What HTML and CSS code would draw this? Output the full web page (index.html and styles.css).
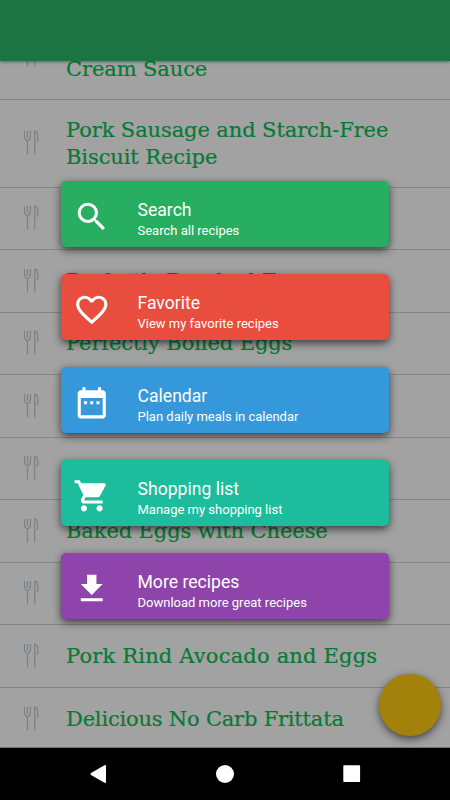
FILE: index.html
```html
<!DOCTYPE html>
<html lang="en">
<head>
<meta charset="utf-8">
<title>Recipes</title>
<link rel="stylesheet" href="styles.css">
</head>
<body>
<svg class="defs" width="0" height="0">
  <symbol id="cutlery" viewBox="0 0 16 26">
    <path d="M1.500 1v5.500Q1.500 9.500 4.500 11Q7.500 9.500 7.500 6.500V1M4.500 1v7M4.500 11v13.500M11.700 24.500V1.200C14 1.200 14.800 4 14.800 7.500V10.500L13.400 11.500" fill="none" stroke="currentColor" stroke-width="1.200"/>
  </symbol>
</svg>
<div class="screen">
  <header class="bar"></header>
  <main class="list">
    <div class="row tall first"><svg class="cutlery"><use href="#cutlery"/></svg><span class="title"><br>Cream Sauce</span></div>
    <div class="row tall"><svg class="cutlery"><use href="#cutlery"/></svg><span class="title">Pork Sausage and Starch-Free<br>Biscuit Recipe</span></div>
    <div class="row"><svg class="cutlery"><use href="#cutlery"/></svg></div>
    <div class="row"><svg class="cutlery"><use href="#cutlery"/></svg><span class="title">Perfectly Poached Eggs</span></div>
    <div class="row"><svg class="cutlery"><use href="#cutlery"/></svg><span class="title">Perfectly Boiled Eggs</span></div>
    <div class="row"><svg class="cutlery"><use href="#cutlery"/></svg></div>
    <div class="row"><svg class="cutlery"><use href="#cutlery"/></svg></div>
    <div class="row"><svg class="cutlery"><use href="#cutlery"/></svg><span class="title">Baked Eggs with Cheese</span></div>
    <div class="row"><svg class="cutlery"><use href="#cutlery"/></svg></div>
    <div class="row"><svg class="cutlery"><use href="#cutlery"/></svg><span class="title wide">Pork Rind Avocado and Eggs</span></div>
    <div class="row"><svg class="cutlery"><use href="#cutlery"/></svg><span class="title narrow">Delicious No Carb Frittata</span></div>
  </main>
  <nav class="navbar">
    <svg width="450" height="52" viewBox="0 0 450 52" fill="#fff">
      <path d="M104.500 17.300Q106 16.600 106 18V34Q106 35.400 104.500 34.700L91 27Q89.800 26 91 25Z"/>
      <circle cx="225" cy="26" r="9"/>
      <rect x="343.300" y="17.300" width="16.800" height="16.800" rx=".8"/>
    </svg>
  </nav>
  <div class="menu">
    <a class="card search"><svg class="icon" viewBox="0 0 24 24"><path d="M15.500 14h-.79l-.28-.27A6.471 6.471 0 0 0 16 9.500 6.500 6.500 0 1 0 9.500 16c1.610 0 3.090-.59 4.230-1.570l.27.28v.79l5 4.990L20.490 19l-4.990-5zm-6 0C7.010 14 5 11.990 5 9.500S7.010 5 9.500 5 14 7.010 14 9.500 11.990 14 9.500 14z"/></svg><div class="label"><b>Search</b><small>Search all recipes</small></div></a>
    <a class="card favorite"><svg class="icon" viewBox="0 0 24 24"><path d="M16.500 3c-1.740 0-3.410.81-4.500 2.090C10.910 3.810 9.240 3 7.500 3 4.420 3 2 5.420 2 8.500c0 3.780 3.400 6.860 8.550 11.540L12 21.350l1.450-1.320C18.600 15.360 22 12.280 22 8.500 22 5.420 19.580 3 16.500 3zm-4.400 15.550l-.1.100-.1-.1C7.140 14.240 4 11.390 4 8.500 4 6.500 5.500 5 7.500 5c1.540 0 3.040.99 3.570 2.360h1.870C13.460 5.990 14.960 5 16.500 5c2 0 3.500 1.500 3.500 3.500 0 2.890-3.140 5.740-7.900 10.050z"/></svg><div class="label"><b>Favorite</b><small>View my favorite recipes</small></div></a>
    <a class="card calendar"><svg class="icon" viewBox="0 0 24 24"><path d="M9 11H7v2h2v-2zm4 0h-2v2h2v-2zm4 0h-2v2h2v-2zm2-7h-1V2h-2v2H8V2H6v2H5c-1.110 0-1.990.9-1.990 2L3 20a2 2 0 0 0 2 2h14c1.100 0 2-.9 2-2V6c0-1.100-.9-2-2-2zm0 16H5V9h14v11z"/></svg><div class="label"><b>Calendar</b><small>Plan daily meals in calendar</small></div></a>
    <a class="card shopping"><svg class="icon" viewBox="0 0 24 24"><path d="M7 18c-1.100 0-1.990.9-1.990 2S5.900 22 7 22s2-.9 2-2-.9-2-2-2zM1 2v2h2l3.600 7.590-1.350 2.450c-.16.28-.25.61-.25.960 0 1.100.9 2 2 2h12v-2H7.420c-.14 0-.25-.11-.25-.25l.03-.12.9-1.630h7.450c.75 0 1.410-.41 1.750-1.030l3.580-6.490A1 1 0 0 0 20 4H5.210l-.94-2H1zm16 16c-1.100 0-1.990.9-1.990 2s.89 2 1.990 2 2-.9 2-2-.9-2-2-2z"/></svg><div class="label"><b>Shopping list</b><small>Manage my shopping list</small></div></a>
    <a class="card more"><svg class="icon" viewBox="0 0 24 24"><path d="M19 9h-4V3H9v6H5l7 7 7-7zM5 18v2h14v-2H5z"/></svg><div class="label"><b>More recipes</b><small>Download more great recipes</small></div></a>
  </div>
  <div class="fab"></div>
</div>
</body>
</html>
```

FILE: styles.css
```css
* { box-sizing: border-box; }
body { margin: 0; }
.defs { position: absolute; }
.screen {
  position: relative;
  width: 450px;
  height: 800px;
  overflow: hidden;
  display: flex;
  flex-direction: column;
  background: #a2a2a2;
}
.bar {
  flex: none;
  height: 61px;
  background: #1b7441;
  box-shadow: 0 1px 3px rgba(0, 0, 0, .4);
  z-index: 1;
}
.list {
  flex: none;
  height: 687px;
  overflow: hidden;
  border-bottom: 1px solid #707472;
}
.row {
  height: 62.5px;
  padding-left: 23px;
  display: flex;
  align-items: center;
  border-bottom: 1px solid #868686;
}
.row.tall { height: 88px; }
.row.tall .title { padding-top: 1.500px; }
.row.first { margin-top: -49.300px; }
.list .row:last-child { border-bottom: 0; }
.cutlery {
  flex: none;
  width: 16px;
  height: 26px;
  margin-right: 27px;
  color: #77828a;
}
.title {
  font: 21px/26.5px "DejaVu Serif", serif;
  letter-spacing: -.1px;
  color: #057a35;
  -webkit-text-stroke: .2px #057a35;
  white-space: nowrap;
}
.title.wide { letter-spacing: .18px; }
.title.narrow { letter-spacing: -.2px; }
.navbar { flex: none; height: 52px; background: #000; }
.navbar svg { display: block; }
.menu {
  position: absolute;
  left: 61px;
  top: 181px;
  width: 328px;
  display: flex;
  flex-direction: column;
  gap: 27px;
  z-index: 2;
}
.card {
  height: 66px;
  padding-left: 12px;
  border-radius: 5px;
  display: flex;
  align-items: center;
  color: #fff;
  box-shadow: 0 3px 9px rgba(0, 0, 0, .65);
}
.search { background: #28ae61; }
.favorite { background: #e84d3d; }
.calendar { background: #3598db; }
.shopping { background: #1cbc9d; }
.more { background: #8e44ab; }
.icon { flex: none; width: 37.500px; height: 37.500px; fill: #fff; margin-top: 5px; }
.label {
  margin-left: 27px;
  padding-top: 11px;
  display: flex;
  flex-direction: column;
  font-family: Roboto, sans-serif;
  white-space: nowrap;
}
.label b { font-size: 17.600px; line-height: 22px; font-weight: 400; }
.label small { font-size: 13px; line-height: 20px; }
.fab {
  position: absolute;
  left: 379px;
  top: 674px;
  width: 62px;
  height: 62px;
  border-radius: 50%;
  background: #a2820a;
  box-shadow: 0 3px 8px rgba(0, 0, 0, .6);
}
```
